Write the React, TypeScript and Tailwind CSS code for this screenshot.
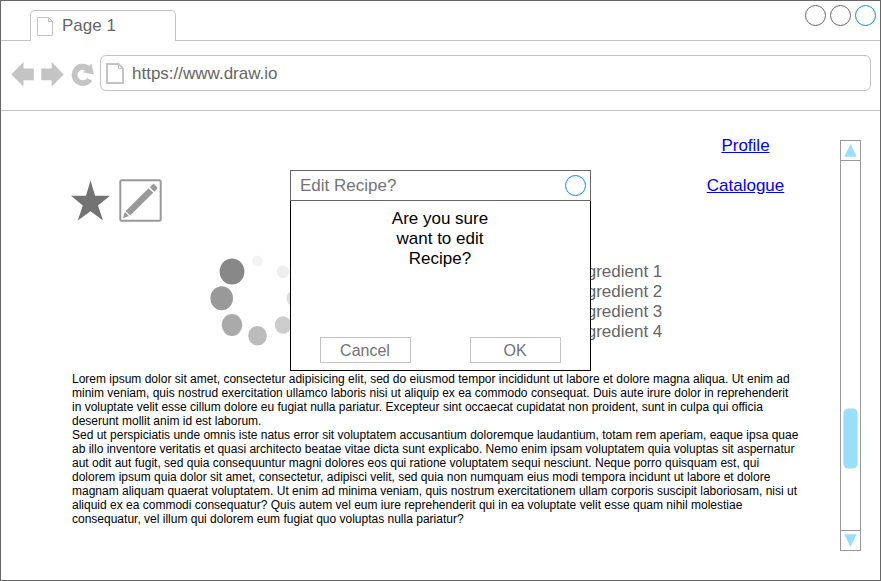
const firstParagraph = [
  'Lorem ipsum dolor sit amet, consectetur adipisicing elit, sed do eiusmod tempor incididunt ut labore et dolore magna aliqua. Ut enim ad',
  'minim veniam, quis nostrud exercitation ullamco laboris nisi ut aliquip ex ea commodo consequat. Duis aute irure dolor in reprehenderit',
  'in voluptate velit esse cillum dolore eu fugiat nulla pariatur. Excepteur sint occaecat cupidatat non proident, sunt in culpa qui officia',
  'deserunt mollit anim id est laborum.',
];

const secondParagraph = [
  'Sed ut perspiciatis unde omnis iste natus error sit voluptatem accusantium doloremque laudantium, totam rem aperiam, eaque ipsa quae',
  'ab illo inventore veritatis et quasi architecto beatae vitae dicta sunt explicabo. Nemo enim ipsam voluptatem quia voluptas sit aspernatur',
  'aut odit aut fugit, sed quia consequuntur magni dolores eos qui ratione voluptatem sequi nesciunt. Neque porro quisquam est, qui',
  'dolorem ipsum quia dolor sit amet, consectetur, adipisci velit, sed quia non numquam eius modi tempora incidunt ut labore et dolore',
  'magnam aliquam quaerat voluptatem. Ut enim ad minima veniam, quis nostrum exercitationem ullam corporis suscipit laboriosam, nisi ut',
  'aliquid ex ea commodi consequatur? Quis autem vel eum iure reprehenderit qui in ea voluptate velit esse quam nihil molestiae',
  'consequatur, vel illum qui dolorem eum fugiat quo voluptas nulla pariatur?',
];

const ingredients = ['Ingredient 1', 'Ingredient 2', 'Ingredient 3', 'Ingredient 4'];

function TabBar() {
  return (
    <header className="flex h-10 shrink-0 justify-between border-b border-[#c4c4c4]">
      <div className="-mb-px ml-[29px] mt-[9px] flex w-[146px] rounded-t-[5px] border border-b-0 border-[#c4c4c4] bg-white">
        <svg className="ml-[6px] mt-[6px] shrink-0" width="16" height="19" viewBox="0 0 16 19" fill="none" stroke="#c4c4c4">
          <path d="M.5.5h11l4 4v14H.5zM11.5.5v4h4" />
        </svg>
        <span className="ml-[9px] mt-[5px] leading-5">Page 1</span>
      </div>
      <div className="mr-1 mt-1 flex gap-1">
        <span className="size-[21px] rounded-full border border-[#666]" />
        <span className="size-[21px] rounded-full border border-[#666]" />
        <span className="size-[21px] rounded-full border border-[#008cff]" />
      </div>
    </header>
  );
}

function Toolbar() {
  return (
    <nav className="flex h-[70px] shrink-0 border-b border-[#c4c4c4] pt-[14px]">
      <svg className="ml-[10px] mt-[6px] shrink-0" width="84" height="28" viewBox="11 61 84 28" fill="#c4c4c4">
        <path d="M11.3 74.5 23.5 62v6.5h10.3v11.7H23.5v6.3zM63.7 74.5 51.7 62v6.5H41.3v11.7h10.4v6.3z" />
        <path d="M92.2 80.7 87.2 77.9A5.3 5.3 0 1 1 85.2 70.3L82.9 72.2 94 74.6 91.3 63.4 89.3 65.8A11.1 11.1 0 1 0 92.2 80.7z" />
      </svg>
      <div className="ml-[5px] flex h-9 w-[771px] rounded-[6px] border border-[#c4c4c4]">
        <svg className="ml-[5px] mt-[7px] shrink-0" width="18" height="21" viewBox="0 0 18 21" fill="none" stroke="#c4c4c4">
          <path strokeWidth="2" d="M1 1h11.5L17 5.5V20H1z" />
          <path d="M12.5 1v4.5H17" />
        </svg>
        <span className="ml-[8px] mt-[8px] leading-5">https://www.draw.io</span>
      </div>
    </nav>
  );
}

function Spinner() {
  return (
    <svg className="shrink-0" width="96" height="92" viewBox="210 255 96 92">
      <ellipse cx="257.5" cy="261" rx="5.2" ry="5.4" fill="#f3f3f3" />
      <ellipse cx="283" cy="271.7" rx="6.2" ry="6.5" fill="#eee" />
      <ellipse cx="293.6" cy="298.3" rx="7.2" ry="7.6" fill="#ddd" />
      <ellipse cx="283" cy="325" rx="8.2" ry="8.7" fill="#ccc" />
      <ellipse cx="257.5" cy="335.7" rx="9.3" ry="9.8" fill="#bbb" />
      <ellipse cx="232" cy="325" rx="10.3" ry="10.9" fill="#aaa" />
      <ellipse cx="221.7" cy="298.3" rx="11.3" ry="12" fill="#999" />
      <ellipse cx="232" cy="271.5" rx="12.4" ry="13.1" fill="#888" />
    </svg>
  );
}

function Content() {
  return (
    <div className="flex w-[839px] flex-col">
      <div className="flex h-[144px] justify-between">
        <div className="ml-[69px] mt-[67px] flex">
          <svg width="42" height="46" viewBox="70 178 42 46" fill="#737373">
            <path d="M90.5 180.5 95.1 195.7H110L98 205.4 103 220.5 90.5 211.3 77.8 220.5 82.8 205.4 71 195.7H86z" />
          </svg>
          <svg className="ml-[6px]" width="46" height="46" viewBox="118 178 46 46">
            <rect x="120.3" y="180.3" width="40.4" height="40.4" rx="1.5" fill="none" stroke="#999" strokeWidth="2" />
            <path d="M122.8 218.2 124.9 212 129 216.1zM125.7 211.1 148.6 188.3 153.2 192.8 130.2 215.5zM149.8 187.2 152.5 184.4Q153.5 183.6 154.5 184.5L157 187Q157.8 188 157 188.9L154.4 191.7z" fill="#999" />
          </svg>
        </div>
        <div className="mr-[54.5px] mt-[25px] flex w-20 flex-col items-center gap-5 leading-5 text-[#0000ff]">
          <a className="underline" href="#">Profile</a>
          <a className="underline" href="#">Catalogue</a>
        </div>
      </div>
      <div className="flex h-[117px]">
        <div className="ml-[209px] flex">
          <Spinner />
        </div>
        <ul className="ml-[266.5px] mt-[7px] leading-5">
          {ingredients.map((item) => (
            <li key={item}>{item}</li>
          ))}
        </ul>
      </div>
      <article className="ml-[71px] whitespace-nowrap text-[12px] leading-[14px] text-black">
        {[firstParagraph, secondParagraph].map((lines) => (
          <p key={lines[0]}>
            {lines.map((line) => (
              <span key={line} className="block">{line}</span>
            ))}
          </p>
        ))}
      </article>
    </div>
  );
}

function ScrollBar() {
  return (
    <div className="mt-[29px] flex h-[411px] w-[21px] flex-col border border-[#999]">
      <div className="h-5 border-b border-[#999]">
        <svg width="19" height="19" viewBox="0 0 19 19" fill="#99ddff">
          <path d="M9.5 3 15.7 15.7H3.3z" />
        </svg>
      </div>
      <div className="flex-1 pl-[2px] pt-[247px]">
        <svg width="15" height="61" viewBox="0 0 15 61" fill="#99ddff">
          <rect x=".4" y=".4" width="14.2" height="60.2" rx="5" />
        </svg>
      </div>
      <div className="h-5 border-t border-[#999]">
        <svg width="19" height="19" viewBox="0 0 19 19" fill="#99ddff">
          <path d="M3.3 3.3H15.7L9.5 16z" />
        </svg>
      </div>
    </div>
  );
}

function ConfirmDialog() {
  return (
    <section role="dialog" className="absolute left-[289px] top-[169px] flex h-[201px] w-[301px] flex-col bg-white">
      <div className="flex h-[31px] shrink-0 justify-between border border-[#666] pl-[9px] pr-1 pt-1">
        <h2 className="leading-[21px] text-[#737373]">Edit Recipe?</h2>
        <span className="size-[21px] rounded-full border border-[#008cff]" />
      </div>
      <div className="flex flex-1 flex-col justify-between border border-t-0 border-black pb-[7px] pt-[8px]">
        <p className="-ml-px text-center leading-5 text-black">
          Are you sure<br />want to edit<br />Recipe?
        </p>
        <div className="flex justify-between px-[29px] text-base text-[#737373]">
          <button className="h-[26px] w-[91px] border border-[#c4c4c4] pr-px pt-px leading-[23px]">Cancel</button>
          <button className="h-[26px] w-[91px] border border-[#c4c4c4] pr-px pt-px leading-[23px]">OK</button>
        </div>
      </div>
    </section>
  );
}

export default function App() {
  return (
    <div className="relative flex h-[581px] w-[881px] flex-col overflow-hidden border border-[#666] bg-white font-['Liberation_Sans',Arial,sans-serif] text-[17px] text-[#666]">
      <TabBar />
      <Toolbar />
      <main className="flex flex-1">
        <Content />
        <ScrollBar />
      </main>
      <ConfirmDialog />
    </div>
  );
}
